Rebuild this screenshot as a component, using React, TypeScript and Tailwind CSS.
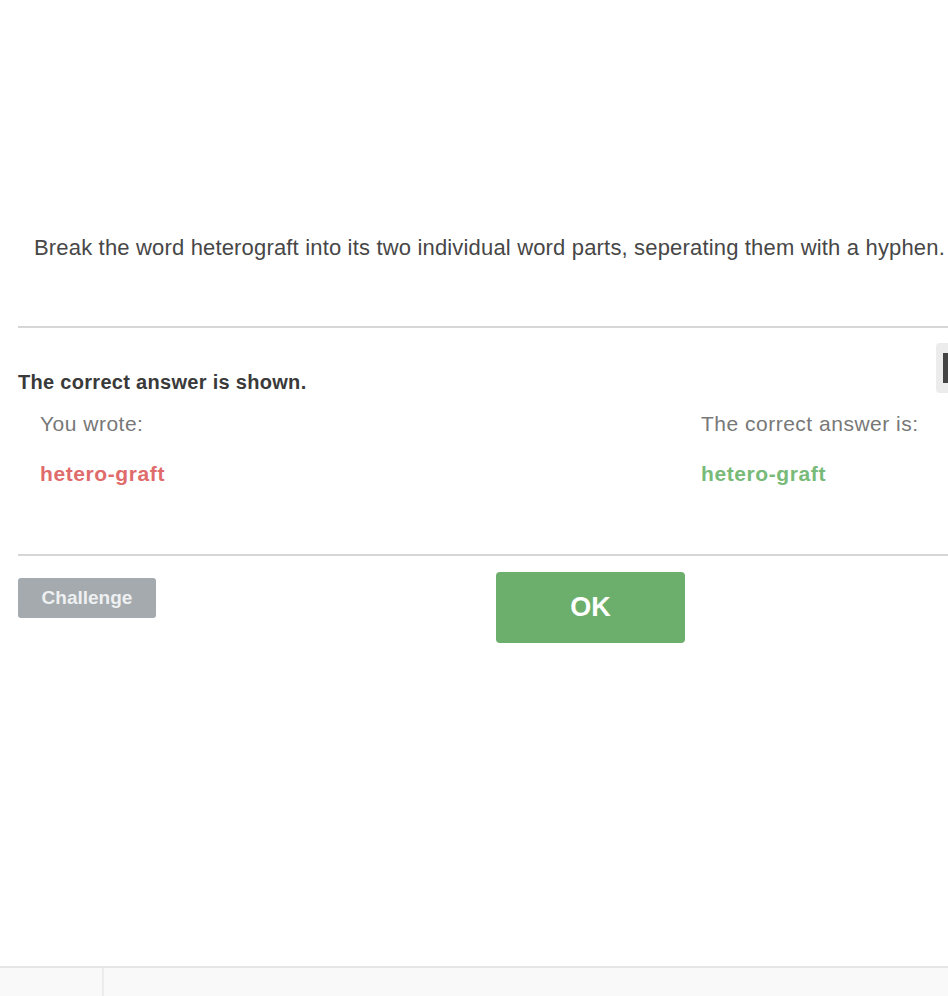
import React from "react";

const font = { fontFamily: '"Liberation Sans", Arial, sans-serif' };

export default function App() {
  return (
    <div
      className="relative flex h-[996px] w-full flex-col overflow-hidden bg-white"
      style={font}
    >
      {/* Question prompt */}
      <p className="pl-[34px] pt-[236px] text-[22px] leading-[24px] tracking-[0.17px] whitespace-nowrap text-[#474747]">
        Break the word heterograft into its two individual word parts, seperating them with a hyphen.
      </p>

      <div className="ml-[18px] mt-[66px] h-[2px] bg-[#d6d6d6]" />

      {/* Feedback header with side tab */}
      <div className="mt-[15px] flex items-end justify-between pl-[18px]">
        <h2 className="text-[20px] font-bold leading-[22px] tracking-[0.3px] text-[#3a3a3a]">
          The correct answer is shown.
        </h2>
        <div className="mr-[-20px] flex h-[50px] w-[32px] items-center rounded-[4px] bg-[#ececec] pl-[7px]">
          <div className="h-[30px] w-[6px] bg-[#444]" />
        </div>
      </div>

      {/* Answers */}
      <div className="mt-[20px] flex pl-[40px]">
        <div className="w-[661px]">
          <div className="text-[21px] leading-[22px] tracking-[0.5px] text-[#787878]">You wrote:</div>
          <div className="mt-[28px] text-[21px] font-bold leading-[22px] tracking-[0.6px] text-[#e06b6b]">
            hetero-graft
          </div>
        </div>
        <div>
          <div className="text-[21px] leading-[22px] tracking-[0.5px] text-[#787878]">The correct answer is:</div>
          <div className="mt-[28px] text-[21px] font-bold leading-[22px] tracking-[0.6px] text-[#78ba78]">
            hetero-graft
          </div>
        </div>
      </div>

      <div className="ml-[18px] mt-[69px] h-[2px] bg-[#d6d6d6]" />

      {/* Actions */}
      <div className="flex items-start pl-[18px]">
        <button className="mt-[22px] h-[40px] w-[138px] rounded-[3px] bg-[#a4aaae] text-[19px] font-bold text-[#eef0f1]">
          Challenge
        </button>
        <button className="ml-[340px] mt-[16px] h-[71px] w-[189px] rounded-[4px] bg-[#6caf6c] text-[27px] font-bold text-white">
          OK
        </button>
      </div>

      {/* Footer strip */}
      <div className="mt-auto flex h-[30px] border-t-2 border-[#e6e6e6] bg-[#f9f9f9]">
        <div className="w-[104px] border-r-2 border-[#ececec]" />
      </div>
    </div>
  );
}
